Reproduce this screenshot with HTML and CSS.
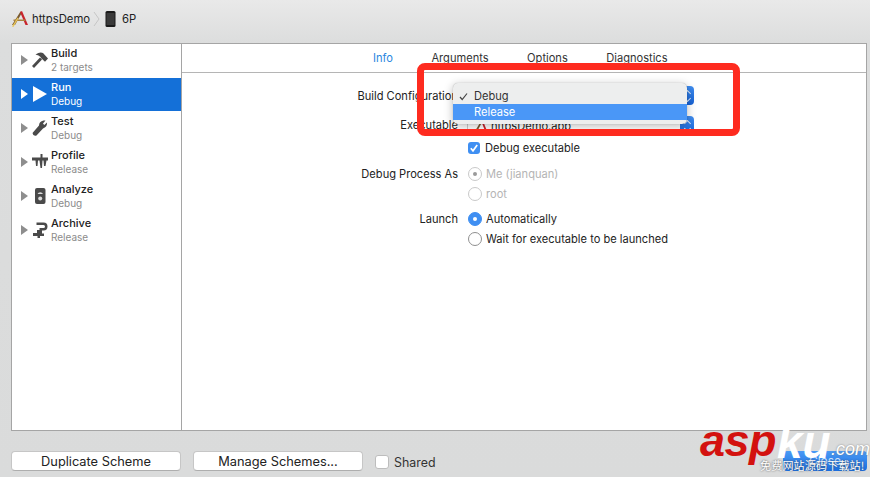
FILE: index.html
```html
<!DOCTYPE html>
<html lang="en">
<head>
<meta charset="utf-8">
<title>Scheme editor</title>
<link rel="stylesheet" href="styles.css">
</head>
<body>
<div class="window">
  <header class="topbar">
    <svg class="app-icon" width="18" height="18" viewBox="0 0 18 18">
      <path d="M1 15 L9.500 1.500 L11 2.500 L4 15Z" fill="#7a5a30"/>
      <path d="M9 2 L11 1 L17 15 L14.500 15Z" fill="#c8242c"/>
      <path d="M2.500 9.500 H14.500 V11 H2.500Z" fill="#a8813f"/>
      <path d="M1 16.500 L6.500 7.500 L7.600 8.200 L2.400 17Z" fill="#e8c75a"/>
    </svg>
    <span class="crumb">httpsDemo</span>
    <svg class="chev" width="7" height="16" viewBox="0 0 7 16"><path d="M1 1 L6 8 L1 15" fill="none" stroke="#c6c6c6"/></svg>
    <svg class="phone" width="11" height="16" viewBox="0 0 11 16"><rect x=".5" width="10" height="16" rx="1.500" fill="#1b1b1b"/><rect x="1.500" y="2" width="8" height="12" fill="#3a3a3a"/></svg>
    <span class="crumb device">6P</span>
  </header>

  <main class="panel">
    <nav class="sidebar">
      <div class="row">
        <span class="tri"></span>
        <svg class="ico" width="16" height="16" viewBox="0 0 16 16"><path d="M0 14 L2 16 L10 7.500 L8 5.500Z M3.500 2.500 Q8 -.5 11 1 L16 6.500 L13 9.800 L9.500 6.500 L8.500 5 Q7 3 3.500 2.500Z" fill="#4a4a4a"/></svg>
        <div class="txt"><b>Build</b><small>2 targets</small></div>
      </div>
      <div class="row sel">
        <span class="tri"></span>
        <svg class="ico" width="16" height="16" viewBox="0 0 16 16"><path d="M1 0 L15 8 L1 16Z" fill="#fff"/></svg>
        <div class="txt"><b>Run</b><small>Debug</small></div>
      </div>
      <div class="row">
        <span class="tri"></span>
        <svg class="ico" width="16" height="16" viewBox="0 0 16 16"><path d="M.5 13 L7 5.500 Q7 1.500 11.500 .5 L13.500 .5 L11 3.500 L12.200 5 L15 2.500 Q15.500 7 11 8.500 L4.500 15.500 Q1 16.500 .5 13Z" fill="#4a4a4a"/></svg>
        <div class="txt"><b>Test</b><small>Debug</small></div>
      </div>
      <div class="row">
        <span class="tri"></span>
        <svg class="ico" width="16" height="16" viewBox="0 0 16 16"><path d="M0 3.500 H8.500 V0 H10.500 V3.500 H16 V6.500 H14.500 L13.500 12 H12 L11.500 6.500 H10.500 L10 14 H8.500 L7.500 6.500 H6 L5.500 12 H4 L3.500 6.500 H0Z" fill="#4a4a4a"/></svg>
        <div class="txt"><b>Profile</b><small>Release</small></div>
      </div>
      <div class="row">
        <span class="tri"></span>
        <svg class="ico" width="16" height="16" viewBox="0 0 16 16"><rect x="3" y="0" width="10.500" height="16" rx="2" fill="#4a4a4a"/><path d="M5.500 6 a3 3 0 0 1 5.500 0Z" fill="#ddd"/><circle cx="8.200" cy="10.500" r="2" fill="#ddd"/></svg>
        <div class="txt"><b>Analyze</b><small>Debug</small></div>
      </div>
      <div class="row">
        <span class="tri"></span>
        <svg class="ico" width="16" height="16" viewBox="0 0 16 16"><path d="M4.500 .5 H11.500 Q15.500 .5 15.500 4.500 Q15.500 8.500 11.500 8.500 H10 V11.500 H12 V14 H1 V11 H5 V8 H7.500 V6 H11.500 Q13 6 13 4.500 Q13 3 11.500 3 H4.500Z M5.500 13 H8 V16 H5.500Z" fill="#4a4a4a"/></svg>
        <div class="txt"><b>Archive</b><small>Release</small></div>
      </div>
    </nav>

    <section class="detail">
      <div class="tabs">
        <span class="tab on">Info</span>
        <span class="tab">Arguments</span>
        <span class="tab">Options</span>
        <span class="tab">Diagnostics</span>
      </div>
      <div class="form">
        <label class="lab r1">Build Configuration</label>
        <div class="popup r1"><span class="step"><i></i><i class="dn"></i></span></div>

        <label class="lab r2">Executable</label>
        <div class="popup plain r2">
          <svg width="16" height="14" viewBox="0 0 18 18"><path d="M1 16 L9.500 2 L11 3 L4 16Z" fill="#7a5a30"/><path d="M9 2 L11 1 L17 16 L14.500 16Z" fill="#c8242c"/></svg>
          <span>httpsDemo.app</span>
          <span class="step"><i></i><i class="dn"></i></span>
        </div>

        <div class="opt r3"><span class="check"><svg width="12" height="12" viewBox="0 0 12 12"><path d="M2.800 6.200 L5 8.800 L9.200 3" fill="none" stroke="#fff" stroke-width="1.700"/></svg></span>Debug executable</div>

        <label class="lab r4">Debug Process As</label>
        <div class="opt dim r4"><span class="radio dotted"></span>Me (jianquan)</div>
        <div class="opt dim r5"><span class="radio"></span>root</div>

        <label class="lab r6">Launch</label>
        <div class="opt r6"><span class="radio on"></span>Automatically</div>
        <div class="opt r7"><span class="radio dark"></span>Wait for executable to be launched</div>
      </div>
    </section>
  </main>

  <footer class="bottom">
    <button class="btn">Duplicate Scheme</button>
    <button class="btn">Manage Schemes...</button>
    <span class="box"></span><span class="shared">Shared</span>
    <span class="close">Close</span>
  </footer>
</div>

<div class="menu">
  <div class="item"><svg class="tick" width="9" height="9" viewBox="0 0 9 9"><path d="M1 5 L3.200 7.500 L8 1.500" fill="none" stroke="#444" stroke-width="1.200"/></svg>Debug</div>
  <div class="item hi">Release</div>
</div>
<div class="redbox"></div>
<div class="mark"><span class="asp">asp</span><span class="ku">ku</span><span class="com">.com</span><div class="slogan">免费网站源码下载站!</div></div>
</body>
</html>
```
FILE: styles.css
```css
* { box-sizing: border-box; }
html, body { margin: 0; height: 100%; }
body { width: 870px; height: 477px; overflow: hidden; position: relative; font-family: Inter, "Noto Sans CJK SC", sans-serif; font-size: 11.100px; color: #222; background: #dcdddd; }
.window { display: flex; flex-direction: column; height: 477px; background: linear-gradient(#e9e9e9, #dcdddd 43px, #dadbdb); }

.topbar { height: 43px; padding: 0 0 5px 11px; display: flex; align-items: center; }
.app-icon { margin-right: 3px; }
.crumb { font-size: 11.300px; color: #222; }
.chev { margin: 0 5px 0 3px; }
.phone { margin-right: 6px; }

.panel { height: 388px; margin: 0 3px 0 11px; display: flex; background: #fff; border: 1px solid #a5a5a5; }
.sidebar { width: 170px; flex: none; border-right: 1px solid #a5a5a5; }
.row { height: 34px; display: flex; align-items: center; padding-left: 9px; }
.row .tri { width: 0; height: 0; border-left: 7px solid #8e8e8e; border-top: 5px solid transparent; border-bottom: 5px solid transparent; margin: -2px 4px 0 0; }
.ico { margin-top: -2px; flex: none; }
.txt { display: flex; flex-direction: column; line-height: 14px; margin: -2px 0 0 3px; }
.txt b { font-weight: 500; font-size: 11px; color: #222; }
.txt small { font-size: 10px; color: #8b8b8b; }
.row.sel { height: 33px; margin-bottom: 1px; background: #1470d8; }
.row.sel .tri { border-left-color: #fff; }
.row.sel b, .row.sel small { color: #fff; }

.detail { flex: 1; min-width: 0; }
.tabs { height: 29px; border-bottom: 1px solid #b5b5b5; display: flex; padding: 7px 0 0 191px; line-height: 14px; }
.tab { color: #333; margin-right: 38.500px; }
.tab.on { color: #2a86e0; }

.form { display: grid; grid-template-columns: 276px 227px; column-gap: 9px; grid-template-rows: 30px 22px 20px 26px 20px 25px 20px; padding-top: 13px; }
.lab { grid-column: 1; text-align: right; color: #222; line-height: 20px; align-self: end; }
.popup, .opt { grid-column: 2; }
.form .r1 { grid-row: 1; }
.form .r2 { grid-row: 2; }
.form .r3 { grid-row: 3; }
.form .r4 { grid-row: 4; }
.form .r5 { grid-row: 5; }
.form .r6 { grid-row: 6; }
.form .r7 { grid-row: 7; }
.lab.r1 { align-self: start; line-height: 20px; }
.lab.r2 { align-self: start; line-height: 19px; }
.popup { height: 19px; position: relative; background: #fff; border-radius: 4px; display: flex; align-items: center; gap: 2px; padding-left: 5px; color: #222; align-self: start; }
.popup.plain { border-left: 1px solid #ccc; border-radius: 0; }
.step { position: absolute; right: 0; top: 0; width: 14px; height: 19px; background: linear-gradient(#3f8df0, #1661d4); border-radius: 0 4px 4px 0; display: flex; flex-direction: column; align-items: center; justify-content: center; gap: 2px; }
.step i { width: 5px; height: 5px; border: solid #dfeafa; border-width: 1.200px 0 0 1.200px; transform: rotate(45deg); }
.step i.dn { transform: rotate(225deg); margin-top: -2px; }

.opt { display: flex; align-items: center; gap: 4px; color: #222; height: 20px; align-self: end; margin-left: 1px; }
.opt.dim { color: #b4b4b4; }
.check { width: 12px; height: 12px; margin-right: 1px; border-radius: 3px; background: #3f8ff2; display: flex; }
.radio { width: 14px; height: 14px; border-radius: 50%; border: 1px solid #8f8f8f; background: #fff; flex: none; display: flex; align-items: center; justify-content: center; }
.dim .radio { border-color: #c9c9c9; }
.radio.dotted::after, .radio.on::after { content: ""; width: 4px; height: 4px; border-radius: 50%; background: #9a9a9a; }
.radio.on { background: #3f8ff2; border-color: #3f8ff2; }
.radio.on::after { background: #fff; }

.bottom { flex: 1; display: flex; align-items: flex-start; padding: 20px 3px 0 11px; }
.btn { width: 170px; height: 20px; margin-right: 12px; padding: 1px 0 0; background: #fff; border: 1px solid #c6c6c6; border-bottom-color: #aeaeae; border-radius: 4px; font: 12.800px/18px Inter, sans-serif; color: #222; }
.box { width: 14px; height: 14px; margin: 4px 5px 0 0; background: #fff; border: 1px solid #bdbdbd; border-radius: 3px; }
.shared { font-size: 12.400px; color: #333; margin-top: 4px; }
.close { margin-left: auto; width: 84px; height: 20px; border-radius: 4px; background: linear-gradient(#4a9af5, #1a6ee0); color: #cfe2fb; text-align: center; line-height: 20px; font-size: 12px; }

.menu { position: absolute; left: 453px; top: 83px; width: 234px; height: 41px; padding-top: 5px; background: #edeeee; border-radius: 5px; box-shadow: 0 2px 10px rgba(0,0,0,.28), 0 0 1px rgba(0,0,0,.3); }
.item { height: 16px; line-height: 16px; padding-left: 21px; position: relative; color: #333; }
.item.hi { background: #4a97f7; color: #fff; }
.tick { position: absolute; left: 6px; top: 4px; }

.redbox { position: absolute; left: 417px; top: 63px; width: 323px; height: 73px; border: 7px solid #fe2b1f; border-radius: 8px; }

.mark { position: absolute; left: 700px; top: 420px; width: 170px; height: 57px; white-space: nowrap; }
.asp, .ku { position: absolute; font: italic 700 45px/50px "Liberation Sans", sans-serif; }
.asp { left: 0; top: -4px; color: #d3120f; letter-spacing: -.5px; }
.ku { left: 77px; top: -3px; color: #fff; font-size: 46px; }
.com { position: absolute; left: 131px; top: 19px; font: italic 400 18px/20px "Liberation Sans", sans-serif; color: #fff; text-shadow: 0 0 2px #777; }
.slogan { position: absolute; left: 60px; top: 38px; font: 11px/14px "Noto Sans CJK SC", sans-serif; color: #fff; text-shadow: 0 0 2px #444; letter-spacing: .2px; }
```
